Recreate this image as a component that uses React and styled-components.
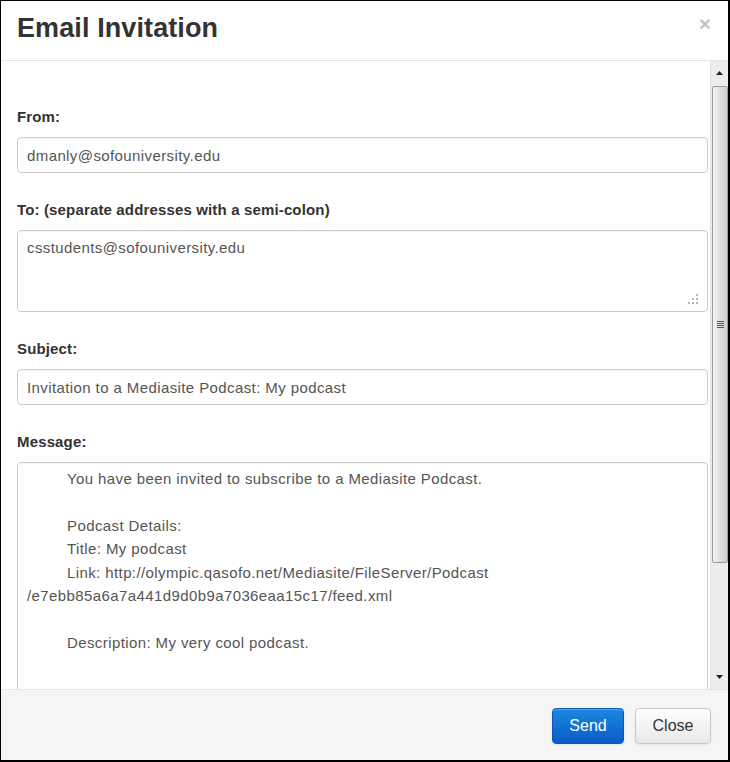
import styled, { createGlobalStyle } from "styled-components";

const Global = createGlobalStyle`
  html, body { margin: 0; padding: 0; background: #fff; }
  body { font-family: "Liberation Sans", Arial, sans-serif; }
`;

const Dialog = styled.div`
  width: 730px;
  height: 762px;
  box-sizing: border-box;
  border: 1px solid #000;
  border-right-width: 2px;
  border-bottom-width: 2px;
  display: flex;
  flex-direction: column;
  background: #fff;
  overflow: hidden;
`;

const Header = styled.div`
  height: 59px;
  flex: none;
  display: flex;
  align-items: center;
  justify-content: space-between;
  padding: 0 17px 0 16px;
  border-bottom: 1px solid #e5e5e5;
`;

const Title = styled.h3`
  margin: 0;
  font-size: 27px;
  font-weight: bold;
  letter-spacing: 0.1px;
  color: #333;
  position: relative;
  top: -2px;
`;

const CloseX = styled.span`
  font-size: 21px;
  font-weight: bold;
  color: #c4c4c4;
  line-height: 1;
  position: relative;
  top: -7px;
`;

const Body = styled.div`
  flex: 1;
  display: flex;
  min-height: 0;
`;

const Content = styled.div`
  flex: 1;
  overflow: hidden;
  padding: 46px 2px 0 16px;
`;

const Group = styled.div`
  margin-bottom: 27px;
`;

const Label = styled.label`
  display: block;
  font-size: 15px;
  font-weight: bold;
  letter-spacing: 0.15px;
  color: #333;
  line-height: 20px;
  margin-bottom: 10px;
`;

const fieldBase = `
  display: block;
  width: 100%;
  box-sizing: border-box;
  border: 1px solid #ccc;
  border-radius: 4px;
  font-family: "Liberation Sans", Arial, sans-serif;
  font-size: 15px;
  letter-spacing: 0.4px;
  color: #555;
  background: #fff;
  outline: none;
  margin: 0;
  box-shadow: inset 0 1px 1px rgba(0,0,0,0.03);
`;

const Input = styled.input`
  ${fieldBase}
  height: 36px;
  padding: 0 9px;
`;

const AreaWrap = styled.div`
  position: relative;
`;

const TextArea = styled.textarea`
  ${fieldBase}
  height: ${(p) => p.$h}px;
  padding: ${(p) => p.$pt}px 9px 6px;
  line-height: ${(p) => p.$lh}px;
  resize: none;
  overflow: hidden;
  tab-size: 40px;
  white-space: pre-wrap;
`;

const Grip = styled.svg`
  position: absolute;
  right: 10px;
  bottom: 8px;
`;

const Scrollbar = styled.div`
  width: 17px;
  flex: none;
  display: flex;
  flex-direction: column;
  background: #ececec;
  border-left: 1px solid #e2e2e2;
`;

const ArrowBtn = styled.div`
  height: 24px;
  flex: none;
  display: flex;
  align-items: center;
  justify-content: center;
`;

const Thumb = styled.div`
  height: 477px;
  flex: none;
  margin: 1px 0 0 1px;
  box-sizing: border-box;
  border: 1px solid #9a9a9a;
  border-radius: 2px;
  background: linear-gradient(to right, #f3f3f3, #dcdcdc 60%, #d0d0d0);
  display: flex;
  align-items: center;
  justify-content: center;
`;

const Track = styled.div`
  flex: 1;
`;

const Footer = styled.div`
  height: 71px;
  flex: none;
  box-sizing: border-box;
  border-top: 1px solid #e5e5e5;
  background: #f5f5f5;
  display: flex;
  align-items: center;
  justify-content: flex-end;
  gap: 11px;
  padding: 1px 17px 0 0;
`;

const Button = styled.button`
  height: 36px;
  width: ${(p) => (p.$primary ? 72 : 76)}px;
  padding: 0;
  font-family: "Liberation Sans", Arial, sans-serif;
  font-size: 16px;
  border-radius: 4px;
  cursor: pointer;
  border: 1px solid ${(p) => (p.$primary ? "#0a55b5" : "#c8c8c8")};
  color: ${(p) => (p.$primary ? "#fff" : "#333")};
  background: ${(p) =>
    p.$primary
      ? "linear-gradient(to bottom, #1c88e0, #0a5cc6)"
      : "linear-gradient(to bottom, #ffffff, #e8e8e8)"};
  box-shadow: inset 0 1px 0 rgba(255,255,255,0.25), 0 1px 2px rgba(0,0,0,0.08);
`;

const message =
  "\tYou have been invited to subscribe to a Mediasite Podcast.\n\n" +
  "\tPodcast Details:\n" +
  "\tTitle: My podcast\n" +
  "\tLink: http://olympic.qasofo.net/Mediasite/FileServer/Podcast\n" +
  "/e7ebb85a6a7a441d9d0b9a7036eaa15c17/feed.xml\n\n" +
  "\tDescription: My very cool podcast.\n";

export default function App() {
  return (
    <>
      <Global />
      <Dialog>
        <Header>
          <Title>Email Invitation</Title>
          <CloseX>×</CloseX>
        </Header>
        <Body>
          <Content>
            <Group>
              <Label>From:</Label>
              <Input readOnly value="dmanly@sofouniversity.edu" />
            </Group>
            <Group>
              <Label>To: (separate addresses with a semi-colon)</Label>
              <AreaWrap>
                <TextArea $h={82} $pt={7} $lh={20} readOnly value="csstudents@sofouniversity.edu" />
                <Grip width="10" height="10" viewBox="0 0 10 10">
                  <g fill="#b5b5b5">
                    <rect x="8" y="0" width="2" height="2" />
                    <rect x="4" y="4" width="2" height="2" />
                    <rect x="8" y="4" width="2" height="2" />
                    <rect x="0" y="8" width="2" height="2" />
                    <rect x="4" y="8" width="2" height="2" />
                    <rect x="8" y="8" width="2" height="2" />
                  </g>
                </Grip>
              </AreaWrap>
            </Group>
            <Group>
              <Label>Subject:</Label>
              <Input readOnly value="Invitation to a Mediasite Podcast: My podcast" />
            </Group>
            <Group>
              <Label>Message:</Label>
              <TextArea $h={260} $pt={4} $lh={23.4} readOnly value={message} />
            </Group>
          </Content>
          <Scrollbar>
            <ArrowBtn>
              <svg width="7" height="4" viewBox="0 0 7 4"><path d="M0 4 L3.5 0 L7 4 Z" fill="#222" /></svg>
            </ArrowBtn>
            <Thumb>
              <svg width="7" height="7" viewBox="0 0 7 7">
                <g fill="#555">
                  <rect x="0" y="0" width="7" height="1" />
                  <rect x="0" y="2" width="7" height="1" />
                  <rect x="0" y="4" width="7" height="1" />
                  <rect x="0" y="6" width="7" height="1" />
                </g>
              </svg>
            </Thumb>
            <Track />
            <ArrowBtn>
              <svg width="7" height="4" viewBox="0 0 7 4"><path d="M0 0 L7 0 L3.5 4 Z" fill="#222" /></svg>
            </ArrowBtn>
          </Scrollbar>
        </Body>
        <Footer>
          <Button $primary>Send</Button>
          <Button>Close</Button>
        </Footer>
      </Dialog>
    </>
  );
}
